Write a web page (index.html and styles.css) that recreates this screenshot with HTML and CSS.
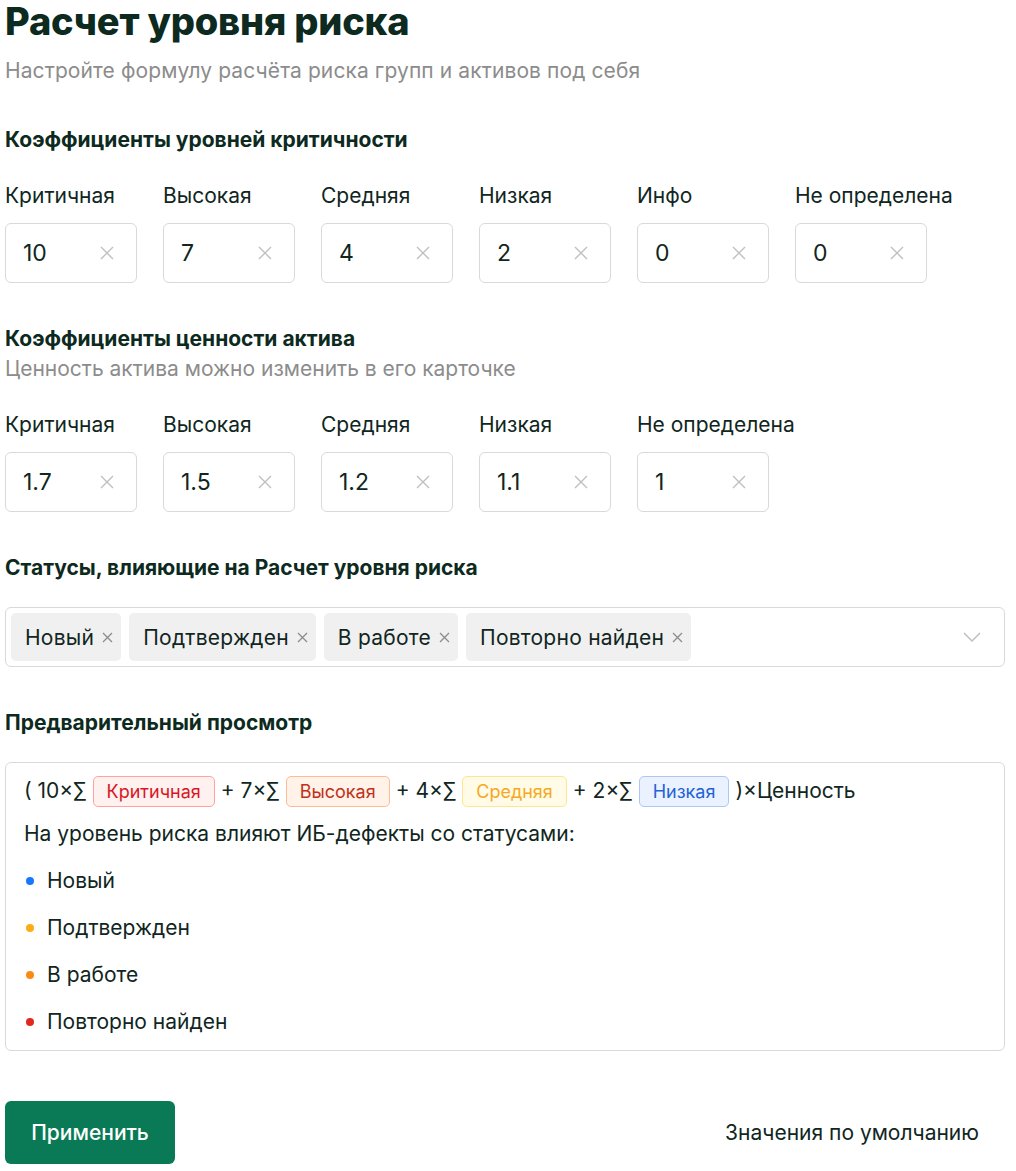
FILE: index.html
```html
<!DOCTYPE html>
<html lang="ru">
<head>
  <meta charset="UTF-8">
  <title>Расчет уровня риска</title>
  <link rel="stylesheet" href="styles.css">
</head>
<body>
  <div class="page">
    <h1 class="title">Расчет уровня риска</h1>
    <p class="subtitle">Настройте формулу расчёта риска групп и активов под себя</p>

    <section class="block first">
      <h3 class="block-title">Коэффициенты уровней критичности</h3>
      <div class="fields">
        <div class="field"><label>Критичная</label><div class="input"><span>10</span><svg class="clear" width="14" height="14" viewBox="0 0 14 14"><path d="M1 1l12 12M13 1L1 13"/></svg></div></div>
        <div class="field"><label>Высокая</label><div class="input"><span>7</span><svg class="clear" width="14" height="14" viewBox="0 0 14 14"><path d="M1 1l12 12M13 1L1 13"/></svg></div></div>
        <div class="field"><label>Средняя</label><div class="input"><span>4</span><svg class="clear" width="14" height="14" viewBox="0 0 14 14"><path d="M1 1l12 12M13 1L1 13"/></svg></div></div>
        <div class="field"><label>Низкая</label><div class="input"><span>2</span><svg class="clear" width="14" height="14" viewBox="0 0 14 14"><path d="M1 1l12 12M13 1L1 13"/></svg></div></div>
        <div class="field"><label>Инфо</label><div class="input"><span>0</span><svg class="clear" width="14" height="14" viewBox="0 0 14 14"><path d="M1 1l12 12M13 1L1 13"/></svg></div></div>
        <div class="field"><label>Не определена</label><div class="input"><span>0</span><svg class="clear" width="14" height="14" viewBox="0 0 14 14"><path d="M1 1l12 12M13 1L1 13"/></svg></div></div>
      </div>
    </section>

    <section class="block">
      <h3 class="block-title">Коэффициенты ценности актива</h3>
      <p class="hint">Ценность актива можно изменить в его карточке</p>
      <div class="fields">
        <div class="field"><label>Критичная</label><div class="input"><span>1.7</span><svg class="clear" width="14" height="14" viewBox="0 0 14 14"><path d="M1 1l12 12M13 1L1 13"/></svg></div></div>
        <div class="field"><label>Высокая</label><div class="input"><span>1.5</span><svg class="clear" width="14" height="14" viewBox="0 0 14 14"><path d="M1 1l12 12M13 1L1 13"/></svg></div></div>
        <div class="field"><label>Средняя</label><div class="input"><span>1.2</span><svg class="clear" width="14" height="14" viewBox="0 0 14 14"><path d="M1 1l12 12M13 1L1 13"/></svg></div></div>
        <div class="field"><label>Низкая</label><div class="input"><span>1.1</span><svg class="clear" width="14" height="14" viewBox="0 0 14 14"><path d="M1 1l12 12M13 1L1 13"/></svg></div></div>
        <div class="field"><label>Не определена</label><div class="input"><span>1</span><svg class="clear" width="14" height="14" viewBox="0 0 14 14"><path d="M1 1l12 12M13 1L1 13"/></svg></div></div>
      </div>
    </section>

    <section class="block">
      <h3 class="block-title">Статусы, влияющие на Расчет уровня риска</h3>
      <div class="select">
        <div class="chips">
          <span class="chip">Новый<svg width="11" height="11" viewBox="0 0 11 11"><path d="M1 1l9 9M10 1L1 10"/></svg></span>
          <span class="chip">Подтвержден<svg width="11" height="11" viewBox="0 0 11 11"><path d="M1 1l9 9M10 1L1 10"/></svg></span>
          <span class="chip">В работе<svg width="11" height="11" viewBox="0 0 11 11"><path d="M1 1l9 9M10 1L1 10"/></svg></span>
          <span class="chip">Повторно найден<svg width="11" height="11" viewBox="0 0 11 11"><path d="M1 1l9 9M10 1L1 10"/></svg></span>
        </div>
        <svg class="chevron" width="20" height="20" viewBox="0 0 20 20"><path d="M2 6l8 8 8-8"/></svg>
      </div>
    </section>

    <section class="block">
      <h3 class="block-title">Предварительный просмотр</h3>
      <div class="preview">
        <div class="formula">
          <span>( 10×∑</span><span class="tag red">Критичная</span>
          <span>+ 7×∑</span><span class="tag volcano">Высокая</span>
          <span>+ 4×∑</span><span class="tag gold">Средняя</span>
          <span>+ 2×∑</span><span class="tag blue">Низкая</span>
          <span>)×Ценность</span>
        </div>
        <p class="note">На уровень риска влияют ИБ-дефекты со статусами:</p>
        <ul class="statuses">
          <li><span class="dot dot-blue"></span>Новый</li>
          <li><span class="dot dot-gold"></span>Подтвержден</li>
          <li><span class="dot dot-orange"></span>В работе</li>
          <li><span class="dot dot-red"></span>Повторно найден</li>
        </ul>
      </div>
    </section>

    <div class="actions">
      <button class="btn-primary">Применить</button>
      <button class="btn-link">Значения по умолчанию</button>
    </div>
  </div>
</body>
</html>
```

FILE: styles.css
```css
body { margin: 0; background: #fff; color: #10261e; font-family: Inter, "Noto Sans", sans-serif; font-size: 21px; }
.page { width: 1000px; padding: 0 0 6px 5px; }

.title { margin: 0; padding-top: 1px; font-size: 38px; line-height: 40px; font-weight: 800; color: #0d2a20; letter-spacing: -0.2px; }
.subtitle { margin: 15px 0 -1px; line-height: 30px; color: #8c8c8c; letter-spacing: 0.1px; }

.block { margin-top: 41px; }
.block.first { margin-top: 40px; }
.block-title { margin: 0; font-size: 21px; line-height: 30px; font-weight: 700; color: #0d2a20; }
.hint { margin: 0; line-height: 30px; color: #8c8c8c; }

.fields { display: flex; gap: 26px; margin-top: 27px; }
.field label { display: block; line-height: 28px; margin-bottom: 13px; }
.input { width: 132px; height: 60px; box-sizing: border-box; border: 1px solid #d9d9d9; border-radius: 6px; display: flex; align-items: center; justify-content: space-between; padding: 0 22px 0 17px; font-size: 23px; }
.clear path { stroke: #bfbfbf; stroke-width: 1.4; fill: none; }

.select { margin-top: 24px; height: 60px; box-sizing: border-box; border: 1px solid #d9d9d9; border-radius: 6px; display: flex; align-items: center; justify-content: space-between; padding: 0 22px 0 5px; }
.chips { display: flex; gap: 8px; }
.chip { background: #f0f0f0; border-radius: 5px; height: 48px; display: flex; align-items: center; gap: 8px; padding: 0 8px 0 14px; letter-spacing: 0.25px; }
.chip path { stroke: #8c8c8c; stroke-width: 1.3; fill: none; }
.chevron path { stroke: #bfbfbf; stroke-width: 1.5; fill: none; }

.preview { margin-top: 24px; border: 1px solid #d9d9d9; border-radius: 6px; padding: 12px 18px 5px; }
.formula { display: flex; align-items: center; gap: 6px; line-height: 32px; white-space: nowrap; }
.tag { display: inline-block; height: 31px; box-sizing: border-box; line-height: 29px; padding: 0 13px; border: 1px solid; border-radius: 5px; font-size: 18px; }
.red { background: #fff1f0; border-color: #ffa39e; color: #d9161f; }
.volcano { background: #fff2e8; border-color: #ffbb96; color: #c1311a; }
.gold { background: #fffbe6; border-color: #ffe58f; color: #f7a823; }
.blue { background: #ebf2ff; border-color: #a9c8f5; color: #2361d6; }

.note { margin: 12px 0 0; line-height: 30px; }
.statuses { list-style: none; margin: 8px 0 0; padding: 0; }
.statuses li { display: flex; align-items: center; height: 47px; }
.dot { width: 8px; height: 8px; border-radius: 50%; margin: 0 13px 0 2px; }
.dot-blue { background: #1677ff; }
.dot-gold { background: #faad14; }
.dot-orange { background: #fa8c16; }
.dot-red { background: #e0281e; }

.actions { margin-top: 50px; display: flex; justify-content: space-between; align-items: center; }
.btn-primary { width: 170px; height: 63px; background: #097a55; color: #fff; border: none; border-radius: 6px; font-family: inherit; font-size: 21px; font-weight: 500; }
.btn-link { background: none; border: none; font-family: inherit; font-size: 21px; color: #10261e; margin-right: 20px; }
```
